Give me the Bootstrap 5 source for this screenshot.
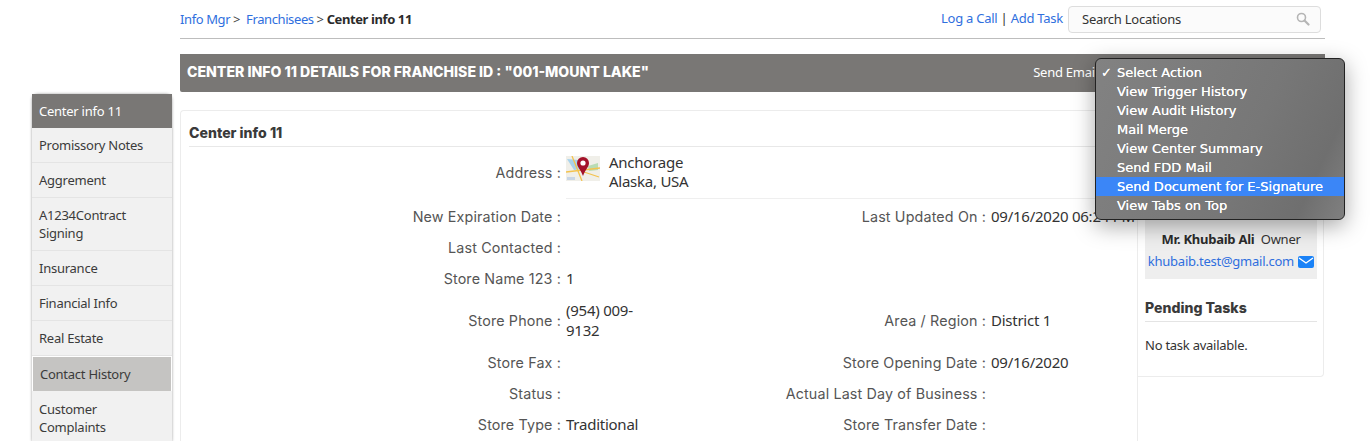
<!DOCTYPE html>
<html lang="en">
<head>
<meta charset="utf-8">
<title>Center info 11</title>
<link href="https://cdn.jsdelivr.net/npm/bootstrap@5.3.0/dist/css/bootstrap.min.css" rel="stylesheet">
<style>
html,body{height:441px;overflow:hidden;background:#fff;}
body{font-family:"Noto Sans",sans-serif;font-size:13px;letter-spacing:-.25px;color:#333;line-height:18px;}
a{color:#2f6fde;text-decoration:none;}
.shell{width:1370px;height:441px;position:relative;overflow:hidden;}
.sidenav{width:140px;margin:94px 8px 0 32px;flex:none;box-shadow:0 0 3px rgba(0,0,0,.4);align-self:flex-start;}
.sidenav .list-group-item{background:#f1f1f1;border:0;border-bottom:1px solid #e4e4e4;border-radius:0;padding:8px 7px;color:#3b3b3b;font-size:13px;line-height:18px;}
.sidenav .list-group-item.now{background:#797775;color:#fff;border-bottom:0;}
.sidenav .list-group-item.hov{background:#c5c4c2;margin:1px 1px 0;padding-left:7px;border-bottom:0;}
.sidenav .list-group-item.lastone{padding-top:9px;}
.mainpane{width:1145px;flex:none;}
.crumbbar{height:39px;border-bottom:1px solid #bdbdbd;font-size:13px;}
.crumbtrail{margin-top:10px;letter-spacing:-.4px;}
.crumbtrail b{color:#2b2b2b;font-weight:700;}
.crumbsep{color:#444;}
.searchbox{width:253px;height:27px;margin:6px 4px 0 5px;position:relative;}
.searchbox .form-control{height:27px;font-size:13px;padding:1px 13px 3px;border-color:#ddd;border-radius:4px;letter-spacing:-.25px;color:#333;background:#fbfbfb;}
.searchbox .form-control::placeholder{color:#333;opacity:1;}
.searchbox svg{position:absolute;right:11px;top:6px;}
.toplinks{margin-top:9px;}
.titlebar{height:38px;margin-top:15px;background:#797775;color:#fff;border-radius:0 0 0 2px;padding:0 7px 2px;}
.titletext{font-family:Inter,sans-serif;font-weight:800;font-size:14.1px;letter-spacing:0;}
.sendlink{margin-right:220px;color:#fff;}
.bodyrow{margin-top:18px;}
.leftcard{width:958px;flex:none;height:400px;border:1px solid #ececec;border-radius:4px 0 0 4px;border-bottom:0;padding:0 7px 0 8px;}
.sechead{font-family:Inter,sans-serif;font-weight:800;font-size:14.1px;letter-spacing:0;color:#3a3a3a;height:36px;line-height:44px;border-bottom:1px solid #e8e8e8;}
.frow{display:grid;grid-template-columns:376px 78px 347px 1fr;column-gap:0;align-items:center;min-height:31px;}
.frow.addr{height:52px;margin-bottom:3px;position:relative;}
.frow.tall{min-height:53px;}
.flabel{font-family:Inter,sans-serif;font-size:14.3px;color:#555;text-align:right;letter-spacing:.15px;padding-right:4px;white-space:nowrap;}
.fvalue{font-size:15px;color:#333;line-height:20px;padding-left:1px;padding-bottom:2px;}
.addrtext{line-height:19px;}
.addrline{height:1px;background:#efefef;margin:-4px 0 2px 377px;}
.mapthumb{width:34px;height:25px;margin:-8px 9px 0 0;flex:none;}
.sidecard{width:186px;flex:none;height:267px;border:1px solid #ececec;border-left:0;border-radius:0 0 4px 0;padding:0 6px 0 7px;}
.ownerbox{margin-top:80px;height:88px;background:#eeeeee;text-align:center;padding-top:39px;white-space:nowrap;}
.ownerbox b{color:#2b2b2b;}
.ownerbox svg{vertical-align:-2px;margin-left:1px;}
.ownermail{margin-top:4px;}
.pendhead{font-family:Inter,sans-serif;font-weight:800;font-size:14.1px;letter-spacing:0;color:#3a3a3a;margin-top:20px;padding-bottom:4px;border-bottom:1px solid #e4e4e4;}
.pendtext{margin-top:14px;}
.popmenu{position:absolute;left:1095px;top:58px;width:250px;height:162px;padding:4px 0;border:1px solid #222;border-radius:6px;background:linear-gradient(115deg,#828282,#777 60%,#6f6f6f 85%,#808080);box-shadow:0 6px 22px rgba(0,0,0,.35);color:#fff;font-family:"DejaVu Sans",sans-serif;font-size:13px;letter-spacing:0;line-height:19px;z-index:5;text-shadow:0 0 .6px #fff;}
.popitem{padding-left:21px;white-space:nowrap;position:relative;height:19px;}
.popitem.sel{background:#3b86f7;}
.popcheck{position:absolute;left:5px;top:0;font-weight:700;}
</style>
</head>
<body>
<div class="shell d-flex">
  <div class="list-group sidenav">
    <a class="list-group-item now" href="#">Center info 11</a>
    <a class="list-group-item" href="#">Promissory Notes</a>
    <a class="list-group-item" href="#">Aggrement</a>
    <a class="list-group-item" href="#">A1234Contract Signing</a>
    <a class="list-group-item" href="#">Insurance</a>
    <a class="list-group-item" href="#">Financial Info</a>
    <a class="list-group-item" href="#">Real Estate</a>
    <a class="list-group-item hov" href="#">Contact History</a>
    <a class="list-group-item lastone" href="#">Customer Complaints</a>
  </div>
  <div class="mainpane">
    <div class="crumbbar d-flex justify-content-between">
      <div class="crumbtrail"><a href="#">Info Mgr</a><span class="crumbsep"> &gt; </span>&nbsp;<a href="#">Franchisees</a><span class="crumbsep"> &gt; </span><b>Center info 11</b></div>
      <div class="d-flex">
        <div class="toplinks"><a href="#">Log a Call</a> | <a href="#">Add Task</a></div>
        <div class="searchbox">
          <input class="form-control" type="text" placeholder="Search Locations">
          <svg width="14" height="14" viewBox="0 0 14 14" fill="none" stroke="#b5b5b5"><circle cx="5.5" cy="5.5" r="4" stroke-width="1.6"/><path d="M8.5 8.5l4 4" stroke-width="2.2" stroke-linecap="round"/></svg>
        </div>
      </div>
    </div>
    <div class="titlebar d-flex justify-content-between align-items-center">
      <div class="titletext">CENTER INFO 11 DETAILS FOR FRANCHISE ID : "001-MOUNT LAKE"</div>
      <div class="sendlink">Send Email</div>
    </div>
    <div class="bodyrow d-flex">
      <div class="leftcard">
        <div class="sechead">Center info 11</div>
        <div class="frow addr">
          <div class="flabel">Address :</div>
          <div class="fvalue d-flex align-items-center" style="grid-column:2 / 5">
            <svg class="mapthumb" viewBox="0 0 34 25">
              <rect width="34" height="25" fill="#f0efe9"/>
              <path d="M1 3l12 1 3 9-8 1z" fill="#a9d3ec"/>
              <path d="M22 10l10-3v7l-9 1z" fill="#b9dcb4"/>
              <path d="M0 16l34-4M6 0l10 25M18 16l15 5" stroke="#f3c34f" stroke-width="1.3" fill="none"/>
              <path d="M1 21h8v3H1z" fill="#c8d6e6"/>
              <path d="M17 1a6 6 0 0 1 6 6c0 4-4 7-6 13-2-6-6-9-6-13a6 6 0 0 1 6-6z" fill="#a3122a"/>
              <circle cx="17" cy="7" r="2.6" fill="#fff"/>
            </svg>
            <div class="addrtext">Anchorage<br>Alaska, USA</div>
          </div>
        </div>
        <div class="addrline"></div>
        <div class="frow"><div class="flabel">New Expiration Date :</div><div class="fvalue"></div><div class="flabel">Last Updated On :</div><div class="fvalue text-nowrap">09/16/2020 06:24 PM</div></div>
        <div class="frow"><div class="flabel">Last Contacted :</div><div class="fvalue"></div><div></div><div></div></div>
        <div class="frow"><div class="flabel">Store Name 123 :</div><div class="fvalue">1</div><div></div><div></div></div>
        <div class="frow tall"><div class="flabel">Store Phone :</div><div class="fvalue">(954) 009-9132</div><div class="flabel">Area / Region :</div><div class="fvalue">District 1</div></div>
        <div class="frow"><div class="flabel">Store Fax :</div><div class="fvalue"></div><div class="flabel">Store Opening Date :</div><div class="fvalue">09/16/2020</div></div>
        <div class="frow"><div class="flabel">Status :</div><div class="fvalue"></div><div class="flabel">Actual Last Day of Business :</div><div class="fvalue"></div></div>
        <div class="frow"><div class="flabel">Store Type :</div><div class="fvalue">Traditional</div><div class="flabel">Store Transfer Date :</div><div class="fvalue"></div></div>
      </div>
      <div class="sidecard">
        <div class="ownerbox">
          <div><b>Mr. Khubaib Ali</b>&nbsp; Owner</div>
          <div class="ownermail"><a href="#">khubaib.test@gmail.com</a>
            <svg width="16" height="12" viewBox="0 0 16 12"><rect width="16" height="12" rx="2" fill="#1a82f7"/><path d="M1 2l7 5 7-5" fill="none" stroke="#fff" stroke-width="1.4"/></svg>
          </div>
        </div>
        <div class="pendhead">Pending Tasks</div>
        <div class="pendtext">No task available.</div>
      </div>
    </div>
  </div>
  <div class="popmenu">
    <div class="popitem"><span class="popcheck">✓</span>Select Action</div>
    <div class="popitem">View Trigger History</div>
    <div class="popitem">View Audit History</div>
    <div class="popitem">Mail Merge</div>
    <div class="popitem">View Center Summary</div>
    <div class="popitem">Send FDD Mail</div>
    <div class="popitem sel">Send Document for E-Signature</div>
    <div class="popitem">View Tabs on Top</div>
  </div>
</div>
<script src="https://cdn.jsdelivr.net/npm/bootstrap@5.3.0/dist/js/bootstrap.bundle.min.js"></script>
</body>
</html>
